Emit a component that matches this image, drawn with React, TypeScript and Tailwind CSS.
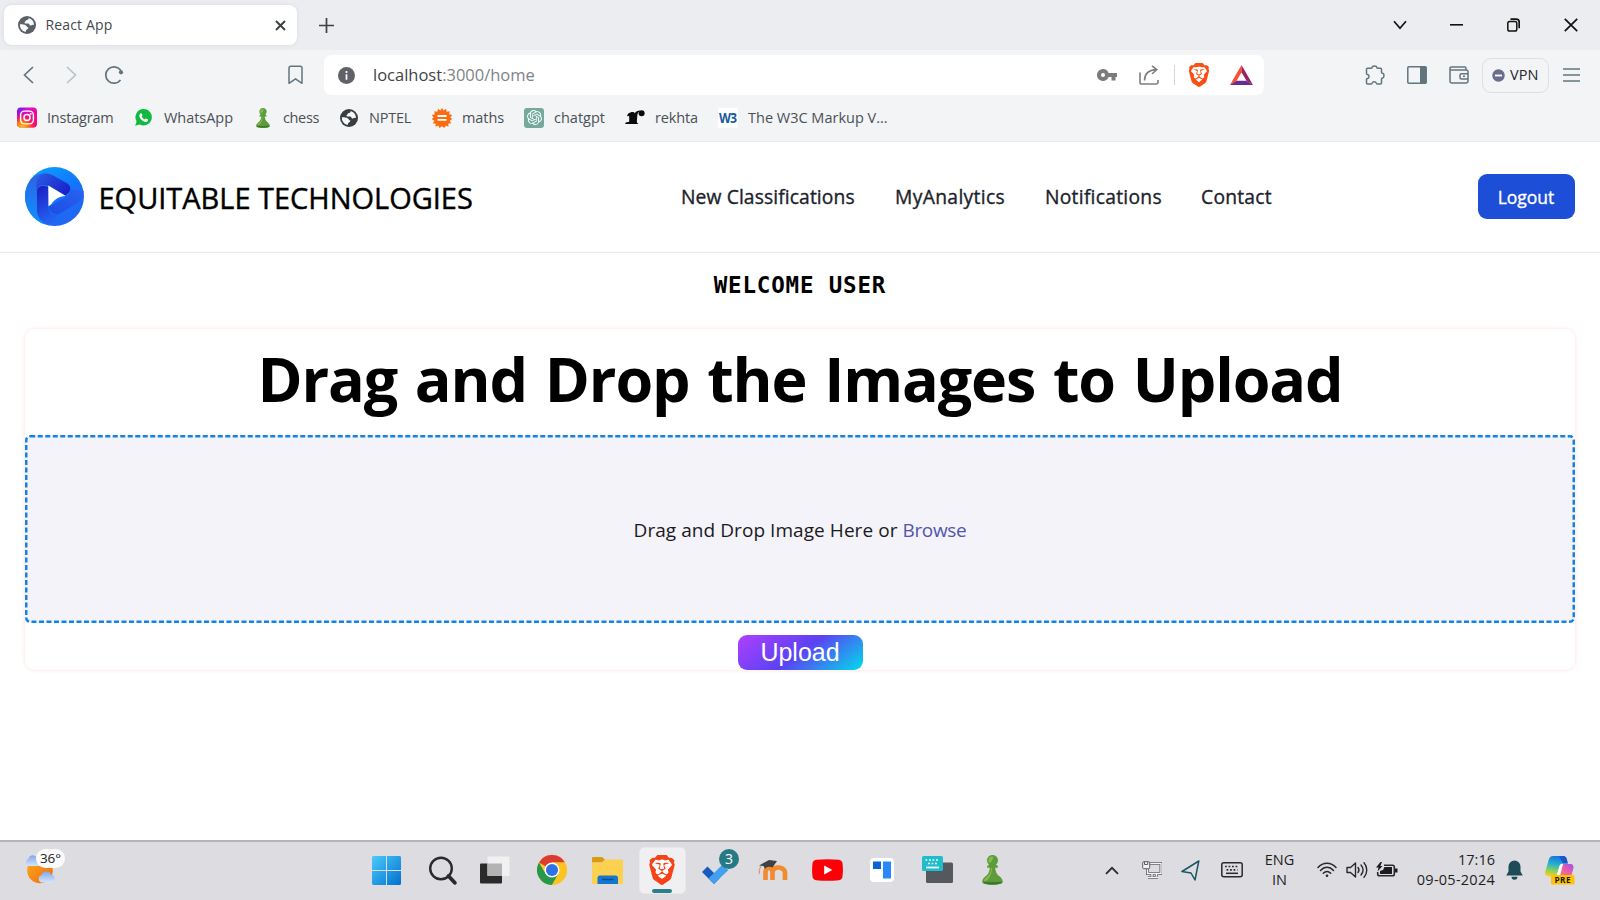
import type { ReactNode } from "react";
import { SiBrave, SiOpenai } from "react-icons/si";

function Globe({ color, size }: { color: string; size: number }) {
  return (
    <svg width={size} height={size} viewBox="0 0 18 18" className="shrink-0">
      <circle cx="9" cy="9" r="9" fill={color} />
      <path d="M10.6 1.9C10.9 3.3 9.7 4 8.1 4.2 7.5 4.4 7.8 5.3 7.1 5.7 6.5 6 6.2 6.8 7.1 7.4L10.4 7.5C11.5 8 11.4 9.2 12.4 9.5 13.9 9.7 14.6 8.6 16.1 8.9 16 5.6 13.8 2.7 10.6 1.9Z" fill="#f7f8f9" />
      <path d="M1.9 8.3C4.5 8.3 6.6 8.4 7.9 9.5 9 10.3 8.8 11.3 10.4 11.5 10.6 12.9 9 13.2 8.3 13.9 7.7 14.5 8.1 15.3 7.5 16 4.2 15.4 1.6 12.2 1.9 8.3Z" fill="#f7f8f9" />
    </svg>
  );
}

function Instagram() {
  return (
    <svg width="21" height="21" viewBox="0 0 21 21">
      <defs>
        <linearGradient id="ig-a" x1="0" y1="0" x2="1" y2=".5">
          <stop offset="0" stopColor="#6a1cf5" />
          <stop offset=".45" stopColor="#d40fd0" />
          <stop offset="1" stopColor="#f8087c" />
        </linearGradient>
        <radialGradient id="ig-b" cx=".25" cy="1.05" r=".85">
          <stop offset="0" stopColor="#ffd600" />
          <stop offset=".35" stopColor="#ff8a00" stopOpacity=".95" />
          <stop offset=".7" stopColor="#ff1b4b" stopOpacity=".7" />
          <stop offset="1" stopColor="#ff0069" stopOpacity="0" />
        </radialGradient>
      </defs>
      <rect width="21" height="21" rx="4" fill="url(#ig-a)" />
      <rect width="21" height="21" rx="4" fill="url(#ig-b)" />
      <g fill="none" stroke="#fff" strokeWidth="1.5">
        <rect x="3.8" y="3.8" width="13.4" height="13.4" rx="4" />
        <circle cx="10.5" cy="10.5" r="3.2" />
      </g>
      <circle cx="14.4" cy="6.7" r="1" fill="#fff" />
    </svg>
  );
}

function WhatsApp() {
  return (
    <svg width="17" height="17" viewBox="0 0 17 17" className="mr-[1px]">
      <path d="M8.700 0a8.200 8.200 0 1 1-4 15.400L.2 16.800l1.400-4.400A8.200 8.200 0 0 1 8.700 0Z" fill="#12b941" />
      <path d="M5.900 4.300c.4-.1.700 0 .9.500l.6 1.500c.1.300 0 .5-.700 1.300.7 1.400 1.700 2.300 3.100 2.900.8-1 1-1.200 1.300-1l1.600.8c.5.300.4 1.300-.1 1.900-.7.700-1.700.9-3 .5-2.300-.7-4-2.300-5-4.500-.5-1.600-.1-3.400 1.300-3.900Z" fill="#fff" />
    </svg>
  );
}

function Pawn({ w, h }: { w: number; h: number }) {
  return (
    <svg width={w} height={h} viewBox="0 0 20 29">
      <path d="M10 0a5.2 5.2 0 0 1 3.4 9.2l1.8 1.6v1.5h-2.6c.2 4 1.6 6.4 4.4 8.6 2 1.7 3 3.5 3 5.8C18 28.4 14 29 10 29S2 28.4 0 26.700c0-2.300 1-4.100 3-5.800 2.800-2.200 4.200-4.600 4.400-8.600H4.800v-1.500l1.800-1.600A5.200 5.200 0 0 1 10 0Z" fill="#5e9c3b" />
      <path d="M9 1.500a4 4 0 0 0-2.600 5.800c1.500.8 4-1.500 4.300-5.600ZM8.600 12.500c0 4-1.300 6.700-4.600 9.300-1.200 1-2 2-2.300 3.500 3.300.5 7.500-5 7.900-12.800Z" fill="#85bb50" />
      <path d="M1 27.200c2 .9 5 1.300 9 1.300s7-.4 9-1.300l-.6-1.700c-2.400.9-14.400.9-16.800 0Z" fill="#3f7a2c" />
    </svg>
  );
}

function MathsIcon() {
  return (
    <svg width="20" height="20" viewBox="0 0 20 20">
      <path d="M10 0l1.700 2.600L14 .8l.700 2.900 3-.4-.5 2.900 2.900.8-1.800 2.400L20.200 11l-2.500 1.700 1.500 2.600-3 .4.300 3-2.800-1.100L12.400 20 10 18.200 7.600 20l-1.300-2.400-2.800 1.100.3-3-3-.4 1.500-2.600L-.2 11l1.900-1.600L-.1 7l2.900-.8-.5-2.900 3 .4L6 .8l2.300 1.800Z" fill="#fb6c10" />
      <path d="M5.500 8h9M5.500 11.800h9" stroke="#fff" strokeWidth="1.800" />
    </svg>
  );
}

function Rekhta() {
  return (
    <svg width="20" height="15" viewBox="0 0 20 15">
      <path d="M3 3.800C5 2.300 7 1.800 9 2.200L9.800 3.200C11 1.400 12.500.5 14.800.4L15 1.200C13.500 1.800 12.800 2.800 12.400 4.500L11.800 12.300 13.300 14H0L.8 12.600 4.200 11.800V6L2 6.300Z" fill="#0b0b0b" />
      <circle cx="16.600" cy="3.200" r="3" fill="#0b0b0b" />
    </svg>
  );
}

function Bookmark({ icon, label, box, text }: { icon: ReactNode; label: string; box: string; text: string }) {
  return (
    <div className={`flex shrink-0 items-center ${box}`}>
      <div className="flex w-[20px] shrink-0 items-center justify-center">{icon}</div>
      <span className={`ml-[10px] whitespace-nowrap text-[14.500px] leading-5 text-[#4b5055] ${text}`}>{label}</span>
    </div>
  );
}

function TabStrip() {
  return (
    <div className="flex h-[50px] shrink-0 items-center bg-[#ecedf1] pl-1">
      <div className="flex h-10 w-[293px] items-center rounded-lg bg-white pl-[13.500px] shadow-[0_0_4px_rgba(0,0,0,0.08)]">
        <Globe color="#5b6065" size={18} />
        <span className="ml-[10px] w-[220px] pb-[2px] text-[14px] tracking-[0.15px] text-[#45494d]">React App</span>
        <svg width="11" height="11" viewBox="0 0 11 11" className="ml-[9px]" stroke="#3c4043" strokeWidth="1.900">
          <path d="M1 1l9 9M10 1l-9 9" />
        </svg>
      </div>
      <svg width="15" height="15" viewBox="0 0 15 15" className="ml-[22px]" stroke="#3c4043" strokeWidth="1.700">
        <path d="M7.500 0v15M0 7.500h15" />
      </svg>
      <div className="ml-auto flex items-center pr-[22px]">
        <svg width="14" height="10" viewBox="0 0 14 10" fill="none" stroke="#111" strokeWidth="1.700">
          <path d="M1 1.200l6 7 6-7" />
        </svg>
        <svg width="13" height="2" viewBox="0 0 13 2" className="ml-[43px]"><rect width="13" height="1.600" fill="#111" /></svg>
        <svg width="13" height="14" viewBox="0 0 13 14" className="ml-[44px]" fill="none" stroke="#111" strokeWidth="1.500">
          <rect x=".8" y="3.500" width="9" height="9.500" rx="1.800" />
          <path d="M3.500 1.200h5.500c1.800 0 3.200 1.200 3.200 3v6" strokeWidth="1.700" />
        </svg>
        <svg width="14" height="14" viewBox="0 0 14 14" className="ml-[44px]" stroke="#111" strokeWidth="1.700">
          <path d="M.8.8l12.400 12.400M13.200.8L.8 13.200" />
        </svg>
      </div>
    </div>
  );
}

function Toolbar() {
  return (
    <div className="flex h-[50px] shrink-0 items-center bg-[#f2f4f6] pl-[23px]">
      <svg width="11" height="18" viewBox="0 0 11 18" fill="none" stroke="#62757e" strokeWidth="1.700">
        <path d="M10 1L1.500 9l8.500 8" />
      </svg>
      <svg width="11" height="18" viewBox="0 0 11 18" className="ml-[32px]" fill="none" stroke="#bcc3c8" strokeWidth="1.700">
        <path d="M1 1l8.500 8L1 17" />
      </svg>
      <svg width="20" height="20" viewBox="0 0 20 20" className="ml-[27px]" fill="none" stroke="#62757e" strokeWidth="1.700">
        <path d="M16.500 14.900A8.200 8.200 0 1 1 16.300 4.800L17 7" />
        <circle cx="17" cy="7.300" r="2.100" fill="#62757e" stroke="none" />
      </svg>
      <svg width="15" height="20" viewBox="0 0 15 20" className="ml-[163.500px]" fill="none" stroke="#62757e" strokeWidth="1.500">
        <path d="M1 18.300V3a1.800 1.800 0 0 1 1.800-1.800h9.400A1.800 1.800 0 0 1 14 3v15.300L7.500 13.800Z" strokeLinejoin="round" />
      </svg>
      <div className="ml-[21.500px] flex h-10 w-[940px] shrink-0 items-center rounded-lg bg-white pl-[14px]">
        <svg width="17" height="17" viewBox="0 0 17 17">
          <circle cx="8.500" cy="8.500" r="8.500" fill="#5f6368" />
          <path d="M8.500 7.300v5.500M8.500 4v2" stroke="#fff" strokeWidth="1.700" />
        </svg>
        <span className="ml-[18px] w-[600px] text-[16.500px] text-[#808387]">
          <span className="text-[#3f4347]">localhost</span>:3000/home
        </span>
        <svg width="20" height="12" viewBox="0 0 20 12" className="ml-[123.500px]">
          <path fillRule="evenodd" d="M6 0a6 6 0 0 1 5.600 4H20v4h-1.500v3.500h-4V8h-2.900A6 6 0 1 1 6 0Zm0 4a2 2 0 1 0 0 4 2 2 0 0 0 0-4Z" fill="#7b7b7b" />
        </svg>
        <svg width="20" height="20" viewBox="0 0 20 20" className="ml-[22px]" fill="none" stroke="#7e7e7e" strokeWidth="1.600">
          <path d="M1 7.500v9.700a1.800 1.800 0 0 0 1.800 1.800h14.400a1.800 1.800 0 0 0 1.800-1.800V15M5.500 15.500C5.500 9 9.500 5 17.500 4.500M13 .8l4.800 3.700-4.800 4.500" />
        </svg>
        <div className="ml-[15px] h-5 w-[1.500px] bg-[#d5d7d8]" />
        <SiBrave size={24} color="#fb4f14" className="ml-[12px]" />
        <svg width="23" height="20" viewBox="0 0 23 20" className="ml-[19px]">
          <path d="M11.500 0L0 20l6.500-4.200 5-8.600Z" fill="#ff4a2b" />
          <path d="M11.500 0L23 20l-6.500-4.200-5-8.600Z" fill="#9b1f63" />
          <path d="M0 20h23l-6.500-4.200h-10Z" fill="#662d91" />
        </svg>
      </div>
      <svg width="20" height="20" viewBox="0 0 20 20" className="ml-[101px] shrink-0" fill="none" stroke="#62757e" strokeWidth="1.500">
        <path d="M1.500 4.300a1 1 0 0 1 1-1h3.700c.7 0 1-.5 1-1C7.200.5 11.700.5 11.700 2.300c0 .6.300 1 1 1h2.800a1 1 0 0 1 1 1v3c0 .7.400 1 1 1 2 .2 2 4.400 0 4.600-.600 0-1 .400-1 1v4.100a1 1 0 0 1-1 1h-3.300c-.600 0-.9-.400-1-1-.3-1.800-3.700-1.800-4 0-.1.600-.4 1-1 1H2.500a1 1 0 0 1-1-1v-3.400c0-.600.3-.900.900-1 2.200-.3 2.200-3.800 0-4.100-.600-.1-.9-.4-.9-1Z" />
      </svg>
      <svg width="20" height="18" viewBox="0 0 20 18" className="ml-[21.500px] shrink-0">
        <rect x=".8" y=".8" width="18.400" height="16.400" rx="1" fill="none" stroke="#62757e" strokeWidth="1.500" />
        <rect x="13" y=".8" width="6.300" height="16.400" fill="#62757e" />
      </svg>
      <svg width="20" height="18" viewBox="0 0 20 18" className="ml-[22.500px] shrink-0" fill="none" stroke="#62757e" strokeWidth="1.500">
        <path d="M17 4V2.300A1.300 1.300 0 0 0 15.700 1H2.300A1.300 1.300 0 0 0 1 2.300v13A1.700 1.700 0 0 0 2.700 17h14.600a1.700 1.700 0 0 0 1.700-1.700V5.500A1.500 1.500 0 0 0 17.500 4H1M19 7.700h-6.500a1.500 1.500 0 0 0-1.500 1.500v2.300a1.500 1.500 0 0 0 1.500 1.500H19M14 10.300h2" />
      </svg>
      <div className="ml-[13px] flex h-[35px] w-[67px] shrink-0 items-center rounded-[9px] border-[1.500px] border-[#dce0e5] pl-[9px]">
        <svg width="13" height="13" viewBox="0 0 13 13">
          <circle cx="6.500" cy="6.500" r="6.200" fill="#6a6d8c" />
          <rect x="3" y="5.600" width="7" height="1.800" fill="#fff" />
        </svg>
        <span className="ml-[5px] text-[14.500px] tracking-[0.1px] text-[#24282c]">VPN</span>
      </div>
      <svg width="17" height="14" viewBox="0 0 17 14" className="ml-[14px] shrink-0" stroke="#62757e" strokeWidth="1.500">
        <path d="M0 1h17M0 7h17M0 13h17" />
      </svg>
    </div>
  );
}

function Bookmarks() {
  return (
    <div className="flex h-[42px] shrink-0 items-center border-b-[1.500px] border-[#e7eae9] bg-[#f2f4f6] pb-[6px] pl-[17px]">
      <Bookmark box="w-[117px]" text="tracking-[-0.21px]" label="Instagram" icon={<Instagram />} />
      <Bookmark box="w-[119px]" text="tracking-[-0.04px]" label="WhatsApp" icon={<WhatsApp />} />
      <Bookmark box="w-[86px]" text="tracking-[-0.36px]" label="chess" icon={<Pawn w={14} h={20} />} />
      <Bookmark box="w-[93px]" text="tracking-[-0.25px]" label="NPTEL" icon={<Globe color="#3a3d40" size={18} />} />
      <Bookmark box="w-[92px]" text="tracking-[-0.09px]" label="maths" icon={<MathsIcon />} />
      <Bookmark
        box="w-[101px]"
        text=""
        label="chatgpt"
        icon={
          <div className="flex size-5 items-center justify-center rounded-[3px] bg-[#74a99b]">
            <SiOpenai size={15} color="#fff" />
          </div>
        }
      />
      <Bookmark box="w-[93px]" text="tracking-[-0.14px]" label="rekhta" icon={<Rekhta />} />
      <Bookmark
        box="w-[180px]"
        text=""
        label="The W3C Markup V..."
        icon={
          <div className="flex size-5 items-center justify-center rounded-xs bg-white">
            <span className="scale-x-[0.820] text-[15px] leading-none font-bold tracking-[-1px] text-[#175a9e]">W3</span>
          </div>
        }
      />
    </div>
  );
}

function Logo() {
  return (
    <svg width="59" height="59" viewBox="0 0 59 59" className="shrink-0">
      <defs>
        <linearGradient id="lg-a" x1=".2" y1="0" x2=".8" y2="1">
          <stop offset="0" stopColor="#0aa0ff" />
          <stop offset=".5" stopColor="#1274fb" />
          <stop offset="1" stopColor="#2563f0" />
        </linearGradient>
        <linearGradient id="lg-e" x1=".3" y1="0" x2=".2" y2="1">
          <stop offset="0" stopColor="#2d63e6" />
          <stop offset="1" stopColor="#0b93ff" />
        </linearGradient>
        <linearGradient id="lg-b" x1="0" y1=".2" x2="1" y2=".8">
          <stop offset="0" stopColor="#2a58e2" />
          <stop offset="1" stopColor="#1a1fc6" />
        </linearGradient>
        <linearGradient id="lg-c" x1="0" y1="0" x2=".3" y2="1">
          <stop offset="0" stopColor="#191cc4" />
          <stop offset="1" stopColor="#2360ee" />
        </linearGradient>
        <linearGradient id="lg-d" x1="1" y1="0" x2="0" y2="1">
          <stop offset="0" stopColor="#2a62ef" />
          <stop offset="1" stopColor="#1c4de6" />
        </linearGradient>
      </defs>
      <circle cx="29.500" cy="29.500" r="29.500" fill="url(#lg-a)" />
      <path d="M2.500 18C6 10 12 6.500 19 6.500L14 20 12 46c1 5 4 9 8 11.500C8 53.500 0 42 0 29.500 0 25.500.8 21.500 2.500 18Z" fill="url(#lg-e)" />
      <path d="M12 24c0-5 5-7.500 11-5L40 28.500c6-3 7-8.500 2.500-12L28 8.500C25 6.800 22 6.300 18.500 6.600 12 9 10 16 12 24Z" fill="url(#lg-b)" />
      <path d="M12 25c0-4.500 3.500-7 8-6l3.300 1v20.500C23.800 46 28 49.500 33 47c-3 7-7 10-12 9C15 53 12 48 12 43Z" fill="url(#lg-c)" />
      <path d="M58.500 24c.5 5-1.500 9-6 12L36 46c-5.500 3-11 0-12.700-6L41 30c3-1.500 4.800-4.500 4.300-8Z" fill="url(#lg-d)" />
      <path d="M23.300 18.500L40.500 28.700C34 29.500 29 32.500 26.500 37L23.500 39.300Z" fill="#fff" />
    </svg>
  );
}

function SiteHeader() {
  const link = "text-[19.250px] whitespace-nowrap text-[#1b222c] [-webkit-text-stroke:0.350px_#1b222c]";
  return (
    <header className="flex h-[111px] shrink-0 items-center border-b border-[#e9eaec] pr-[25px] pb-[2px] pl-[24.500px]">
      <Logo />
      <span className="ml-[15px] w-[566px] pt-[3px] text-[29px] tracking-[-0.020px] whitespace-nowrap text-black [-webkit-text-stroke:0.400px_#000]">
        EQUITABLE TECHNOLOGIES
      </span>
      <nav className="flex w-[797px] shrink-0 pt-[3px] pl-[16.500px]">
        <span className={`w-[214px] tracking-[0.110px] ${link}`}>New Classifications</span>
        <span className={`w-[150px] tracking-[0.350px] ${link}`}>MyAnalytics</span>
        <span className={`w-[156px] tracking-[0.270px] ${link}`}>Notifications</span>
        <span className={`tracking-[0.250px] ${link}`}>Contact</span>
      </nav>
      <button className="ml-[16px] h-[45px] w-[97px] shrink-0 rounded-[9px] bg-[#1d4ed8] pt-[2px] text-[17.500px] text-white [-webkit-text-stroke:0.350px_#fff]">
        Logout
      </button>
    </header>
  );
}

function UploadCard() {
  return (
    <section className="mx-[25px] mt-[27px] flex h-[341px] shrink-0 flex-col items-center rounded-[10px] shadow-[0_0_4px_#ffdcd9]">
      <h1 className="flex h-[106px] items-center pb-[8px] text-[61px] leading-none font-bold tracking-[-1.120px] whitespace-nowrap text-black [word-spacing:3px]">
        Drag and Drop the Images to Upload
      </h1>
      <div className="relative flex h-[188px] w-full items-center justify-center rounded-[5px] bg-[#f4f3f9]">
        <svg className="absolute inset-0" width="1550" height="188" viewBox="0 0 1550 188" fill="none">
          <rect x="1.250" y="1.250" width="1547.500" height="185.500" rx="4" stroke="#1583e6" strokeWidth="2.500" strokeDasharray="5 2.500" />
        </svg>
        <p className="pt-[3px] text-[19px] whitespace-nowrap text-[#1a1a1e]">
          <span className="tracking-[0.060px]">Drag and Drop Image Here or </span>
          <span className="tracking-[-0.330px] text-[#5256ad]">Browse</span>
        </p>
      </div>
      <button className="mt-[12px] h-[35px] w-[125px] rounded-[9px] bg-[linear-gradient(144deg,#af40ff,#5b42f3_50%,#00ddeb)] font-['Liberation_Sans',sans-serif] text-[25px] leading-none text-white">
        Upload
      </button>
    </section>
  );
}

function Cell({ w, children }: { w: string; children: ReactNode }) {
  return <div className={`flex h-full shrink-0 items-center justify-center ${w}`}>{children}</div>;
}

function Weather() {
  return (
    <div className="relative ml-[25px] h-[36px] w-[42px]">
      <svg width="32" height="32" viewBox="0 0 32 32" className="absolute top-[4px] -left-[1.500px]">
        <defs>
          <linearGradient id="sun" x1="0" y1="0" x2="1" y2="1">
            <stop offset="0" stopColor="#ffab1a" />
            <stop offset="1" stopColor="#ee6a12" />
          </linearGradient>
          <linearGradient id="cloud" x1="0" y1="0" x2="0" y2="1">
            <stop offset="0" stopColor="#7fa6ee" />
            <stop offset="1" stopColor="#d6e5fb" />
          </linearGradient>
        </defs>
        <circle cx="16" cy="17.500" r="12.800" fill="url(#sun)" />
        <path d="M4.500 13a4 4 0 0 1 0-7.500C5.500 1.500 11 1 13 5c3 0 5 2 5 4.500S16 13 14 13Z" fill="url(#cloud)" />
        <path d="M17 29.500a4 4 0 0 1 .5-7.500c1-4.500 8-5 9.500-.5 5 .5 5 8 0 8Z" fill="url(#cloud)" />
      </svg>
      <div className="absolute top-0 left-[11px] flex h-[19px] w-[29px] items-center justify-center rounded-full bg-[#fbfbfc]">
        <span className="text-[13.500px] leading-none text-[#222]">36°</span>
      </div>
    </div>
  );
}

function Taskbar() {
  const bits = "text-[14.500px] leading-[20px] text-[#1f1f22] whitespace-nowrap";
  return (
    <footer className="flex h-[60px] shrink-0 items-center border-t-2 border-[#b4b5b6] bg-[#dddde1] pb-[2px]">
      <div className="w-[359px] pb-[6px]"><Weather /></div>
      <Cell w="w-[55px]">
        <svg width="29" height="29" viewBox="0 0 29 29">
          <defs>
            <linearGradient id="win" x1="0" y1="0" x2="1" y2="1">
              <stop offset="0" stopColor="#4ccbfb" />
              <stop offset="1" stopColor="#0070d0" />
            </linearGradient>
          </defs>
          <path d="M1 0h13v14H0V1ZM15 0h13l1 1v13H15ZM0 15h14v14H1l-1-1ZM15 15h14v13l-1 1H15Z" fill="url(#win)" />
        </svg>
      </Cell>
      <Cell w="w-[55px]">
        <svg width="28" height="29" viewBox="0 0 28 29" fill="none" stroke="#2a2a2c" className="ml-[3px]">
          <circle cx="12" cy="12.500" r="10.800" strokeWidth="2.400" />
          <path d="M19.500 20l6.300 6.800" strokeWidth="3.800" strokeLinecap="round" />
        </svg>
      </Cell>
      <Cell w="w-[55px]">
        <svg width="30" height="30" viewBox="0 0 30 30" className="mr-[4px]">
          <rect x="0" y="8.500" width="22" height="20" rx="1" fill="#2a2a2b" />
          <rect x="7.500" y="1.500" width="22" height="19.500" rx="1" fill="#f1f1f2" />
          <rect x="7.500" y="8.500" width="14.500" height="12.500" fill="#b3b3b5" />
        </svg>
      </Cell>
      <Cell w="w-[55px]">
        <svg width="30" height="30" viewBox="0 0 48 48">
          <circle cx="24" cy="24" r="24" fill="#fcc934" />
          <path d="M24 24L3.200 12A24 24 0 0 1 44.800 12L24 12Z" fill="#dd3b30" />
          <path d="M3.200 12A24 24 0 0 0 24 48L34.400 30 13.600 30Z" fill="#279847" />
          <path d="M44.800 12H24V30H34.400L24 48A24 24 0 0 0 44.800 12Z" fill="#fcc420" />
          <circle cx="24" cy="24" r="12" fill="#fff" />
          <circle cx="24" cy="24" r="9.700" fill="#2f72e4" />
        </svg>
      </Cell>
      <Cell w="w-[55px] pl-[1px]">
        <svg width="31" height="27" viewBox="0 0 31 27">
          <path d="M0 1a1 1 0 0 1 1-1h9l3 2.500L10.500 5.500H0Z" fill="#d89c14" />
          <path d="M0 5.500h10l3-3h17a1 1 0 0 1 1 1V27H0Z" fill="#fcd050" />
          <path d="M5.500 27v-6a2.500 2.500 0 0 1 2.500-2.500h15.500A2.500 2.500 0 0 1 26 21v6Z" fill="#1477cc" />
          <path d="M10 22.500h11.500" stroke="#0c4a94" strokeWidth="1.400" />
        </svg>
      </Cell>
      <Cell w="w-[55px] pl-[1px]">
        <div className="flex h-[47px] w-[47px] flex-col items-center rounded-[5px] border border-[#e8e8ea] bg-[#f0f0f3] pt-[7px]">
          <svg width="30" height="30" viewBox="0 0 24 24">
            <path d="M6 3h12l3 5-2 9-7 6-7-6L3 8Z" fill="#fff" />
            <SiBrave size={24} color="#f6431a" />
          </svg>
          <div className="mt-[4px] h-1 w-[20px] shrink-0 rounded-full bg-[#2c7f8c]" />
        </div>
      </Cell>
      <Cell w="w-[55px] pl-[7px] pb-[6px]">
        <div className="relative h-[36px] w-[40px]">
          <svg width="27" height="19" viewBox="0 0 27 19" className="absolute top-[16px] left-[2px]">
            <path d="M0 7L5.500 1.500 12 8l5.500 5.500L12 19Z" fill="#185abd" />
            <path d="M6.500 13.500L20 0l6.500 5L12 18.700Z" fill="#41a0ef" />
          </svg>
          <div className="absolute top-0 left-[19px] flex size-[20px] items-center justify-center rounded-full bg-[#267a86]">
            <span className="text-[14px] leading-none text-white">3</span>
          </div>
        </div>
      </Cell>
      <Cell w="w-[55px] pl-[2px]">
        <svg width="30" height="22" viewBox="0 0 30 22">
          <path d="M7.500 20V12c0-5 7-5 7 0v8M14.500 20V12c0-5 8-6 11.500-2 1 1 1 2 1 3v7" transform="translate(0 1)" fill="none" stroke="#f28a30" strokeWidth="4.700" />
          <path d="M1 6.500L11 1l8 1-4.500 6.500C11 7 8.500 8 7 10L5.500 7Z" fill="#3f4145" />
          <path d="M3 7c-2 3-2 5-1.500 8" stroke="#d99a78" strokeWidth="1.200" fill="none" />
        </svg>
      </Cell>
      <Cell w="w-[55px] pl-[2px]">
        <svg width="31" height="22" viewBox="0 0 31 22">
          <path d="M4 .800Q15.500-.5 27 .800 30 1.200 30.500 4.500 31.300 11 30.500 17.500 30 20.800 27 21.200 15.500 22.500 4 21.200 1 20.800.5 17.500-.3 11 .5 4.500 1 1.200 4 .800Z" fill="#fb0006" />
          <path d="M12.200 6.500l8.200 4.500-8.200 4.500Z" fill="#fff" />
        </svg>
      </Cell>
      <Cell w="w-[55px] pl-[1px]">
        <svg width="24" height="24" viewBox="0 0 24 24">
          <rect width="24" height="24" rx="4" fill="#fff" />
          <rect x="3" y="3.500" width="8" height="7.500" fill="#0a62d6" />
          <rect x="13" y="3.500" width="8" height="17" rx=".5" fill="#2a86fb" />
        </svg>
      </Cell>
      <Cell w="w-[55px] pl-[2px]">
        <svg width="31" height="28" viewBox="0 0 31 28">
          <rect x="4" y="6.500" width="27" height="20.500" rx="1.500" fill="#55595e" />
          <rect x="0" y="0" width="21" height="15" rx="1.500" fill="#1fbccb" />
          <path d="M3.500 4h14M6 7.500h9.500" stroke="#fff" strokeWidth="1.700" strokeDasharray="1.800 1.700" />
          <path d="M4 11.500h13" stroke="#fff" strokeWidth="1.700" />
        </svg>
      </Cell>
      <Cell w="w-[55px] pl-[2px]"><Pawn w={21} h={30} /></Cell>

      <div className="ml-[72px] flex h-full items-center">
        <Cell w="w-[41px]">
          <svg width="14" height="9" viewBox="0 0 14 9" fill="none" stroke="#2a2a2c" strokeWidth="1.800">
            <path d="M1 7.800l6-6 6 6" />
          </svg>
        </Cell>
        <Cell w="w-[40px]">
          <svg width="20" height="18" viewBox="0 0 20 18" fill="none">
            <path d="M7 2.500h12v10H5.500V8M10 12.500v3M14.500 12.500v3M6 16.500h10" stroke="#5d5d60" strokeWidth="3" />
            <path d="M7 2.500h12v10H5.500V8M10 12.500v3M14.500 12.500v3M6 16.500h10" stroke="#f4f4f5" strokeWidth="1.400" />
            <rect x=".7" y=".7" width="7" height="7" rx="1" fill="#f4f4f5" stroke="#5d5d60" />
            <path d="M2.500.8v2.700h3.200V.8" stroke="#5d5d60" />
          </svg>
        </Cell>
        <Cell w="w-[36px]">
          <svg width="19" height="21" viewBox="0 0 19 21" fill="none" stroke="#1b5563" strokeWidth="1.500" strokeLinejoin="round">
            <path d="M17.800 1L1 11.500l9 1.500 4 7Z" />
          </svg>
        </Cell>
        <Cell w="w-[47px]">
          <svg width="22" height="16" viewBox="0 0 22 16" fill="none" stroke="#2a2a2c">
            <rect x=".8" y=".8" width="20.400" height="14" rx="2" strokeWidth="1.500" />
            <path d="M4 4.500h14M5.500 7.800h11" strokeWidth="1.700" strokeDasharray="1.800 1.700" />
            <path d="M5 11.300h12" strokeWidth="1.500" />
          </svg>
        </Cell>
        <Cell w="w-[49px]">
          <p className={`flex flex-col items-center ${bits}`}>
            <span>ENG</span>
            <span>IN</span>
          </p>
        </Cell>
        <Cell w="ml-[8px] w-[30px]">
          <svg width="20" height="16" viewBox="0 0 20 16" fill="none" stroke="#2a2a2c" strokeWidth="1.500" strokeLinecap="round">
            <path d="M1 5.500C6-.3 14-.3 19 5.500M3.500 8.500c4-4.300 9-4.300 13 0M6.300 11.200c2.300-2.400 5.100-2.400 7.400 0" />
            <circle cx="10" cy="13.800" r="1.300" fill="#2a2a2c" stroke="none" />
          </svg>
        </Cell>
        <Cell w="w-[29px]">
          <svg width="22" height="18" viewBox="0 0 22 18" fill="none" stroke="#2a2a2c" strokeWidth="1.400" strokeLinecap="round">
            <path d="M1 6.500h3.500L9.500 2v14l-5-4.500H1Z" strokeLinejoin="round" />
            <path d="M12 6.500c1.200 1.500 1.200 3.500 0 5M15 4c2.500 3 2.500 7 0 10M18 1.800c3.700 4.300 3.700 10 0 14.400" />
          </svg>
        </Cell>
        <Cell w="w-[31px]">
          <svg width="22" height="16" viewBox="0 0 22 16">
            <path d="M8 3.200h8.500a1.800 1.800 0 0 1 1.800 1.800v7a1.800 1.800 0 0 1-1.800 1.800H3.500A1.800 1.800 0 0 1 1.700 12v-2" fill="none" stroke="#2a2a2c" strokeWidth="1.600" />
            <path d="M8.500 5H16v7H4V9l3-1ZM19 6.500h2.500v4H19ZM4.500 0L0 5.500h2.500L1.500 9.500 6.500 4H4.300L6 0Z" fill="#1c1c1e" />
          </svg>
        </Cell>
        <div className={`flex w-[93px] flex-col items-end ${bits}`}>
          <span>17:16</span>
          <span className="tracking-[0.250px]">09-05-2024</span>
        </div>
        <svg width="17" height="20" viewBox="0 0 17 20" className="ml-[11px]" fill="#1d4c58">
          <path d="M8.500.5a6 6 0 0 1 6 6v5l2.300 4H.2l2.300-4v-5a6 6 0 0 1 6-6ZM5.500 16.800h6a3 3 0 0 1-6 0Z" />
        </svg>
        <svg width="30" height="29" viewBox="0 0 30 29" className="ml-[22px]">
          <defs>
            <linearGradient id="cp-a" x1=".4" y1="0" x2=".2" y2="1">
              <stop offset="0" stopColor="#1677e0" />
              <stop offset=".4" stopColor="#27b3c9" />
              <stop offset=".7" stopColor="#8ed05a" />
              <stop offset="1" stopColor="#ffcf20" />
            </linearGradient>
            <linearGradient id="cp-b" x1="1" y1="0" x2="0" y2="1">
              <stop offset="0" stopColor="#9a55e8" />
              <stop offset=".5" stopColor="#ee5da8" />
              <stop offset="1" stopColor="#ff8a4a" />
            </linearGradient>
          </defs>
          <path d="M8 0h10c2.500 0 3.500 2 4 4l.8 3.500H18c-2 0-3 1-3.500 3L12 18.500c-.5 1.500-1.500 2-3 2H4c-3 0-4.500-2-3.700-5L4 3C4.800 1 6 0 8 0Z" fill="url(#cp-a)" />
          <path d="M14 0h4c2.500 0 3.500 2 4 4l.8 3.500H18Z" fill="#1c56cf" />
          <path d="M18 8h7c3 0 4 2 3.300 5L26 20.500H12L15 11c.5-2 1.500-3 3-3Z" fill="url(#cp-b)" />
          <path d="M14.500 10L11.500 20H15l3-12c-2 0-3 .6-3.500 2Z" fill="#fff" />
          <rect x="6" y="19" width="23.500" height="9.500" rx="1.500" fill="#fdc208" />
          <text x="17.800" y="26.700" textAnchor="middle" fontSize="8.200" fontWeight="700" fill="#201a05" letterSpacing=".5">PRE</text>
        </svg>
      </div>
    </footer>
  );
}

export default function App() {
  return (
    <div className="flex h-[900px] w-[1600px] flex-col overflow-hidden bg-white font-['Open_Sans','Noto_Sans',sans-serif]">
      <TabStrip />
      <Toolbar />
      <Bookmarks />
      <SiteHeader />
      <main className="flex min-h-0 flex-1 flex-col">
        <h2 className="mt-[16px] h-[33px] text-center font-['DejaVu_Sans_Mono',monospace] text-[22.500px] leading-[33px] font-bold tracking-[0.830px] text-black">
          WELCOME USER
        </h2>
        <UploadCard />
      </main>
      <Taskbar />
    </div>
  );
}
